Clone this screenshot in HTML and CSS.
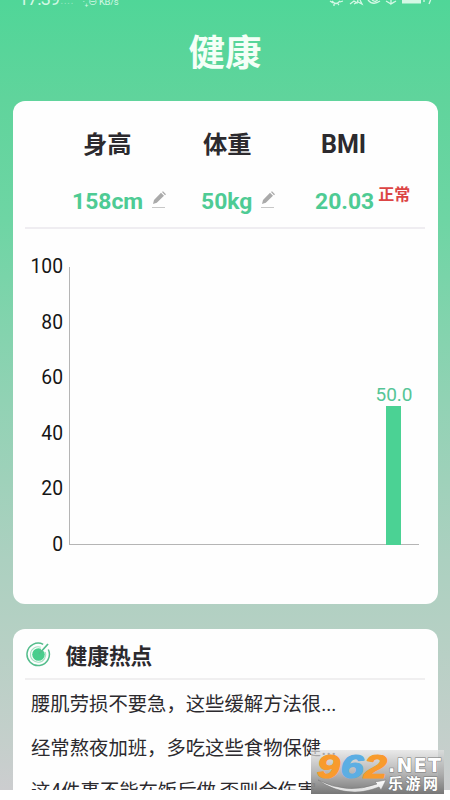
FILE: index.html
```html
<!DOCTYPE html>
<html lang="zh-CN">
<head>
<meta charset="utf-8">
<title>健康</title>
<link rel="stylesheet" href="styles.css">
</head>
<body>
<main class="screen">
  <header class="status">
    <span class="time">17:39</span><span class="dots">::::</span><span class="net">·₊⊖ KB/s</span>
    <svg class="status-icons" width="104" height="14" viewBox="0 0 104 14" fill="none" stroke="currentColor" stroke-width="1.3">
      <path d="M1 8l3 2M3 8q4 5 8 0M5 11v2M9 11l1 1M11 9l3-1"/>
      <path d="M21 11l4-3 3 2 1-3M25 11l4-2 4 2-2-4"/>
      <path d="M39 7q5 6 12 1M43 7q4 3 6-1"/>
      <path d="M57 8l5 3 5-3M62 7v4l3-2"/>
      <path d="M73 8.500h19" stroke-width="4"/>
      <path d="M95 7v2M100 11l2-5"/>
    </svg>
  </header>
  <h1 class="page-title">健康</h1>

  <section class="card stats-card">
    <div class="stats">
      <div class="stat height">
        <h2>身高</h2>
        <p><b>158cm</b><svg class="pencil" width="16" height="18" viewBox="0 0 16 18"><path d="M2 13l1-4 7-7.200 3 3-7.200 7zM11 1l1-.8 3 3-1 1z" fill="#aaa"/><path d="M1 16.500h13" stroke="#c7c7c7"/></svg></p>
      </div>
      <div class="stat weight">
        <h2>体重</h2>
        <p><b>50kg</b><svg class="pencil" width="16" height="18" viewBox="0 0 16 18"><path d="M2 13l1-4 7-7.200 3 3-7.200 7zM11 1l1-.8 3 3-1 1z" fill="#aaa"/><path d="M1 16.500h13" stroke="#c7c7c7"/></svg></p>
      </div>
      <div class="stat bmi">
        <h2>BMI</h2>
        <p><b>20.03</b><em>正常</em></p>
      </div>
    </div>
    <div class="chart">
      <div class="labels"><span>100</span><span>80</span><span>60</span><span>40</span><span>20</span><span>0</span></div>
      <div class="plot">
        <div class="column"><span>50.0</span><div class="bar" style="height:50%"></div></div>
      </div>
    </div>
  </section>

  <section class="card news">
    <div class="news-head">
      <svg width="26" height="26" viewBox="0 0 26 26" fill="none" stroke="#54bd8c">
        <path d="M18.200 3.300A11.200 11.200 0 1 0 23.300 8.500" stroke-width="1.5"/>
        <path d="M15.800 6.300A7.700 7.700 0 1 0 20.400 11" stroke="#a5e0c2" stroke-width="1.1"/>
        <circle cx="13.500" cy="13.500" r="6.300" fill="#48ce8c" stroke="none"/>
        <path d="M17 9.400l5-5.400" stroke="#fff" stroke-width="3.4"/>
        <path d="M14 13l9-10" stroke-width="1.8"/>
      </svg>
      <h2>健康热点</h2>
    </div>
    <ul>
      <li>腰肌劳损不要急，这些缓解方法很...</li>
      <li>经常熬夜加班，多吃这些食物保健...</li>
      <li>这4件事不能在饭后做,否则会伤害...</li>
    </ul>
  </section>
</main>
<div class="watermark">
  <svg width="133" height="44" viewBox="0 0 133 44">
    <defs><linearGradient id="silver" x2="0" y2="1"><stop stop-color="#fff"/><stop offset="1" stop-color="#ddd"/></linearGradient></defs>
    <path d="M7 30Q36 45 66 34L64 32 75 30 70 40 68 37Q36 50 7 30z" fill="url(#silver)" stroke="#777" stroke-width=".5"/>
    <g class="numbers" stroke-width="1.2" stroke-linejoin="round">
      <text x="6" y="28" textLength="23" lengthAdjust="spacingAndGlyphs" fill="#f89b2d" stroke="#f89b2d">9</text>
      <text x="29.500" y="28" textLength="23" lengthAdjust="spacingAndGlyphs" fill="#5caee3" stroke="#5caee3">6</text>
      <text x="53" y="28" textLength="23" lengthAdjust="spacingAndGlyphs" fill="#f89b2d" stroke="#f89b2d">2</text>
    </g>
    <g fill="#fff" stroke="#777" stroke-width="1" paint-order="stroke">
      <text class="domain" x="77" y="22" textLength="53">.NET</text>
      <text class="site" x="77" y="39" textLength="50">乐游网</text>
    </g>
  </svg>
</div>
</body>
</html>
```
FILE: styles.css
```css
* { box-sizing: border-box; }
body {
  margin: 0;
  width: 450px;
  height: 800px;
  overflow: hidden;
  position: relative;
  background: #fff;
  color: #2c2a2e;
  font-family: Roboto, "Noto Sans CJK SC", sans-serif;
}
h1, h2, p, ul { margin: 0; padding: 0; }
.screen {
  height: 790px;
  overflow: hidden;
  padding: 0 12.500px;
  background: linear-gradient(#50d698 0, #60d49c 100px, #6ed5a4 220px, #91d2b4 400px, #acd0c0 560px, #b6d0c4 640px, #c4cfcb 740px, #cccdcf 790px);
}
.status {
  height: 20px;
  display: flex;
  align-items: flex-start;
  padding-left: 6px;
  color: #d4f8e5;
  line-height: 20px;
}
.time { width: 42px; font-size: 18px; margin-top: -11px; letter-spacing: -.8px; }
.dots { width: 22px; font-size: 10px; margin-top: -9px; opacity: .5; letter-spacing: 1px; }
.net { width: 92px; font-size: 9.500px; margin-top: -8px; white-space: nowrap; letter-spacing: -.4px; }
.status-icons { margin: -7px 0 0 154px; }
.page-title {
  height: 80.500px;
  padding-top: 2px;
  text-align: center;
  color: #f4fff7;
  font-size: 36.500px;
  line-height: 63px;
  font-weight: 700;
}
.card { width: 425px; background: #fefefe; border-radius: 12px; }
.stats-card { height: 503.500px; padding: 0 12.500px; }
.stats { height: 128px; display: flex; border-bottom: 2px solid #efedf1; }
.stat { flex: none; }
.stat h2 { height: 43px; padding-top: 26px; line-height: 36px; font-size: 24.300px; font-weight: 700; }
.stat p { display: flex; margin-top: 40.500px; line-height: 36px; color: #4ecb94; font-size: 22.900px; }
.stat b { font-weight: 700; }
.height { width: 129px; padding-left: 47px; }
.height h2 { padding-left: 11px; }
.weight { width: 114px; padding-left: 47px; }
.weight h2 { padding-left: 2px; }
.bmi { padding-left: 47px; white-space: nowrap; }
.bmi h2 { padding-left: 6px; font-size: 25px; }
.pencil { flex: none; margin: 7px 0 0 7.500px; }
.stat em { margin: -7px 0 0 4px; color: #dc4545; font-size: 16px; font-style: normal; font-weight: 700; }
.chart { display: flex; padding-top: 38px; }
.labels {
  display: flex;
  flex-direction: column;
  justify-content: space-between;
  width: 38px;
  height: 304px;
  margin: -12.500px 6px 0 0;
  text-align: right;
  color: #151515;
  font-size: 19.300px;
  line-height: 26px;
}
.plot {
  width: 350px;
  height: 278px;
  border-left: 1px solid #b5b5b5;
  border-bottom: 1px solid #b5b5b5;
  display: flex;
  justify-content: flex-end;
  padding-right: 5px;
}
.column { width: 40px; height: 278px; display: flex; flex-direction: column; align-items: center; justify-content: flex-end; }
.column span { color: #55c596; font-size: 19px; line-height: 23px; }
.bar { width: 15px; margin-right: 1px; background: #4bd294; }
.news { height: 220px; margin-top: 25px; padding: 0 12.500px; }
.news-head { display: flex; height: 50.500px; border-bottom: 2px solid #f0eff0; }
.news-head svg { margin: 12px 14.500px 0 0; }
.news-head h2 { font-size: 21.700px; line-height: 55px; font-weight: 700; }
.news ul { list-style: none; padding: 3.500px 0 0 6px; }
.news li { height: 43.700px; line-height: 44px; font-size: 19.350px; white-space: nowrap; }
.watermark {
  position: absolute;
  left: 311px;
  top: 750px;
  width: 133px;
  height: 44px;
  background: linear-gradient(rgba(225,225,225,.7), rgba(167,167,167,.86) 55%, #777);
}
.watermark svg { display: block; }
.numbers { font: italic 700 34px "Liberation Sans", sans-serif; }
.domain { font: 700 19px "DejaVu Sans", sans-serif; }
.site { font: 700 15px "Noto Sans CJK SC", sans-serif; }
```
